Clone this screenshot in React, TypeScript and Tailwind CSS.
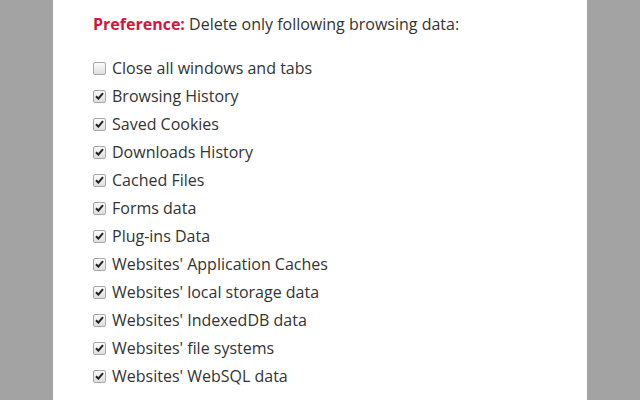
const items: { label: string; checked: boolean }[] = [
  { label: 'Close all windows and tabs', checked: false },
  { label: 'Browsing History', checked: true },
  { label: 'Saved Cookies', checked: true },
  { label: 'Downloads History', checked: true },
  { label: 'Cached Files', checked: true },
  { label: 'Forms data', checked: true },
  { label: 'Plug-ins Data', checked: true },
  { label: "Websites' Application Caches", checked: true },
  { label: "Websites' local storage data", checked: true },
  { label: "Websites' IndexedDB data", checked: true },
  { label: "Websites' file systems", checked: true },
  { label: "Websites' WebSQL data", checked: true },
];

function Box({ checked }: { checked: boolean }) {
  return (
    <span className="w-[13px] h-[13px] shrink-0 rounded-[2px] border border-[#a9a9a9] bg-gradient-to-b from-[#fcfcfc] to-[#dedede] flex items-center justify-center">
      {checked && (
        <svg width="9" height="8" viewBox="0 0 9 8">
          <path d="M1 4.2 L3.4 6.6 L8 1.2" fill="none" stroke="#222" strokeWidth="2" />
        </svg>
      )}
    </span>
  );
}

export default function App() {
  return (
    <div className="w-[640px] h-[400px] bg-[#a3a3a3] flex justify-center overflow-hidden">
      <div className="w-[534px] h-full bg-white pl-[40px] pt-[10px] font-['Open_Sans',sans-serif] text-[16px] text-[#333]">
        <p className="leading-[28px]">
          <span className="font-bold text-[#d4163c]">Preference:</span> Delete only following browsing data:
        </p>
        <ul className="mt-[16px]">
          {items.map((it) => (
            <li key={it.label} className="flex items-center gap-[6px] h-[28px]">
              <Box checked={it.checked} />
              <span>{it.label}</span>
            </li>
          ))}
        </ul>
      </div>
    </div>
  );
}
